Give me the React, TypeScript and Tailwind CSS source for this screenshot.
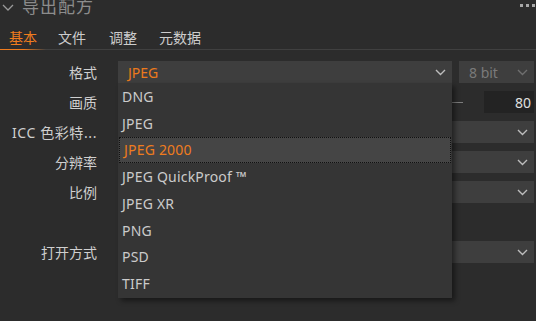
import React from "react";

const font = { fontFamily: '"Noto Sans", "Noto Sans CJK SC", sans-serif' };

const formats = ["DNG", "JPEG", "JPEG 2000", "JPEG QuickProof ™", "JPEG XR", "PNG", "PSD", "TIFF"];

function Chevron({ className = "" }: { className?: string }) {
  return (
    <svg width="11" height="7" viewBox="0 0 11 7" className={className}>
      <path d="M1 1l4.5 4.5L10 1" fill="none" stroke="currentColor" strokeWidth="1.4" />
    </svg>
  );
}

function Select({ children, dim }: { children?: React.ReactNode; dim?: boolean }) {
  return (
    <div className="h-[22px] bg-[#3e3e3e] flex items-center pl-[10px] pr-[6px]">
      <span className={`flex-1 text-[14px] ${dim ? "text-[#7a7a7a]" : "text-[#ec7a1c]"}`}>{children}</span>
      <Chevron className={dim ? "text-[#6f6f6f]" : "text-[#bdbdbd]"} />
    </div>
  );
}

function Label({ children, wide }: { children: React.ReactNode; wide?: boolean }) {
  return (
    <div className={`w-[97px] text-right text-[14px] text-[#cfcfcf] whitespace-nowrap ${wide ? "tracking-[0.6px]" : ""}`}>
      {children}
    </div>
  );
}

export default function App() {
  return (
    <div style={font} className="w-[536px] h-[321px] bg-[#2c2c2c] overflow-hidden relative">
      {/* header */}
      <div className="h-[18px] flex items-start">
        <svg width="14" height="10" viewBox="0 0 14 10" className="mt-[2px] ml-[1px] text-[#9a9a9a]">
          <path d="M2 3l5 5 5-5" fill="none" stroke="currentColor" strokeWidth="1.3" />
        </svg>
        <span className="ml-[7px] -mt-[3px] text-[17px] leading-[20px] text-[#8c8c8c] tracking-[1px]">导出配方</span>
        <div className="ml-auto mt-[4px] mr-[1px] flex gap-[3px]">
          <span className="w-[3px] h-[3px] bg-[#a8a8a8]" />
          <span className="w-[3px] h-[3px] bg-[#a8a8a8]" />
          <span className="w-[3px] h-[3px] bg-[#a8a8a8]" />
        </div>
      </div>

      {/* tabs */}
      <div className="mt-[11px] h-[21px] flex items-start text-[14px] leading-[18px] text-[#cdcdcd] border-b border-[#404040] relative">
        <span className="ml-[9px] text-[#ef7c1e]">基本</span>
        <span className="ml-[21px]">文件</span>
        <span className="ml-[23px]">调整</span>
        <span className="ml-[22px]">元数据</span>
        <div className="absolute left-0 bottom-[-1px] w-[46px] h-[1px] bg-gradient-to-r from-[#ef7c1e] via-[#ef7c1e] to-transparent" />
      </div>

      {/* form */}
      <div className="mt-[11px] flex flex-col gap-[8px] pr-[2px]">
        <div className="flex items-center gap-[21px]">
          <Label>格式</Label>
          <div className="flex-1 flex gap-[7px] relative">
            <div className="flex-1">
              <Select>JPEG</Select>
            </div>
            <div className="w-[75px]">
              <Select dim>8 bit</Select>
            </div>
            {/* open menu */}
            <div className="absolute left-0 top-[22px] w-[334px] bg-[#353535] shadow-[3px_3px_5px_rgba(0,0,0,0.45)] z-10 flex flex-col pb-[1px]">
              {formats.map((f) => (
                <div
                  key={f}
                  className={`h-[26.75px] flex items-center pl-[4px] text-[14px] tracking-[0.2px] ${
                    f === "JPEG 2000"
                      ? "mx-[1px] pl-[3px] bg-[#454545] text-[#ef7c1e] border border-dotted border-[#111]"
                      : "text-[#cbcbcb]"
                  }`}
                >
                  {f}
                </div>
              ))}
            </div>
          </div>
        </div>

        <div className="flex items-center gap-[21px]">
          <Label>画质</Label>
          <div className="flex-1 flex items-center gap-[21px]">
            <div className="flex-1 h-[1px] bg-[#7c7c7c]" />
            <div className="w-[50px] h-[22px] bg-[#232323] flex items-center justify-end pr-[3px] text-[14px] text-[#e0e0e0]">80</div>
          </div>
        </div>

        <div className="flex items-center gap-[21px]">
          <Label wide>ICC 色彩特...</Label>
          <div className="flex-1">
            <Select />
          </div>
        </div>

        <div className="flex items-center gap-[21px]">
          <Label>分辨率</Label>
          <div className="flex-1">
            <Select />
          </div>
        </div>

        <div className="flex items-center gap-[21px]">
          <Label>比例</Label>
          <div className="flex-1">
            <Select />
          </div>
        </div>

        <div className="h-[22px]" />

        <div className="flex items-center gap-[21px]">
          <Label>打开方式</Label>
          <div className="flex-1">
            <Select />
          </div>
        </div>
      </div>
    </div>
  );
}
